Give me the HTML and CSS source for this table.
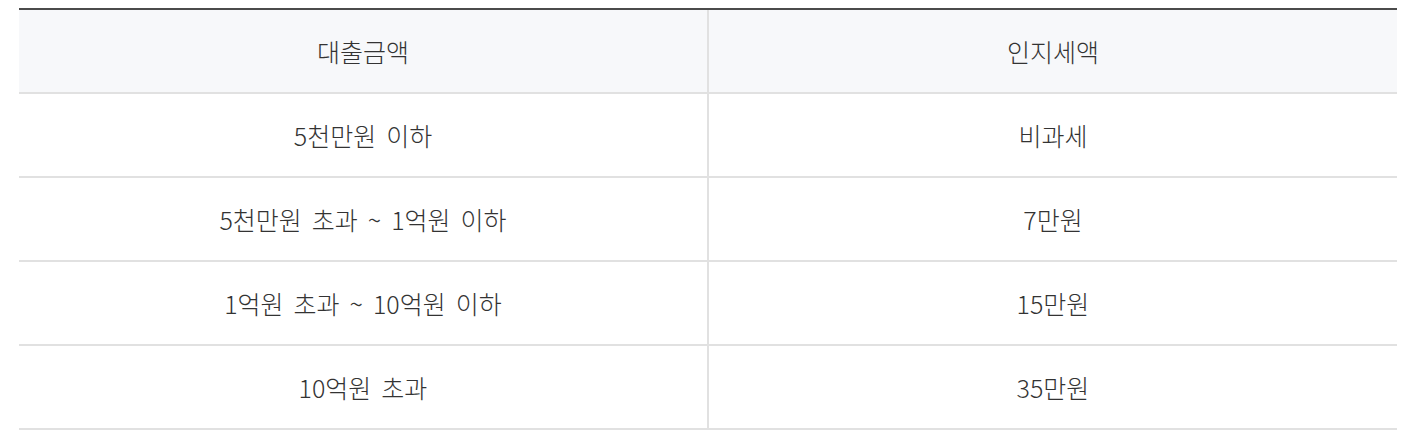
FILE: index.html
```html
<!DOCTYPE html>
<html lang="ko">
<head>
<meta charset="utf-8">
<link rel="stylesheet" href="styles.css">
</head>
<body>
<div class="wrap">
  <div class="table">
    <div class="row head">
      <div class="cell">대출금액</div>
      <div class="cell">인지세액</div>
    </div>
    <div class="row">
      <div class="cell">5천만원 이하</div>
      <div class="cell">비과세</div>
    </div>
    <div class="row">
      <div class="cell">5천만원 초과 ~ 1억원 이하</div>
      <div class="cell">7만원</div>
    </div>
    <div class="row">
      <div class="cell">1억원 초과 ~ 10억원 이하</div>
      <div class="cell">15만원</div>
    </div>
    <div class="row">
      <div class="cell">10억원 초과</div>
      <div class="cell">35만원</div>
    </div>
  </div>
</div>
</body>
</html>
```

FILE: styles.css
```css
html, body {
  margin: 0;
  padding: 0;
  background: #ffffff;
}
.wrap {
  padding: 8px 27px 0 19px;
}
.table {
  width: 1378px;
  border-top: 2px solid #4b4b4b;
  font-family: "Noto Sans CJK KR", "Noto Sans", sans-serif;
  font-size: 25px;
  font-weight: 300;
  word-spacing: 3px;
  color: #333333;
}
.row {
  display: grid;
  grid-template-columns: 690px 688px;
  border-bottom: 2px solid #e1e1e1;
}
.row.head {
  background: #f7f8fa;
}
.cell {
  height: 82px;
  display: flex;
  align-items: center;
  justify-content: center;
  line-height: 1;
}
.cell:first-child {
  border-right: 2px solid #e1e1e1;
}
```
